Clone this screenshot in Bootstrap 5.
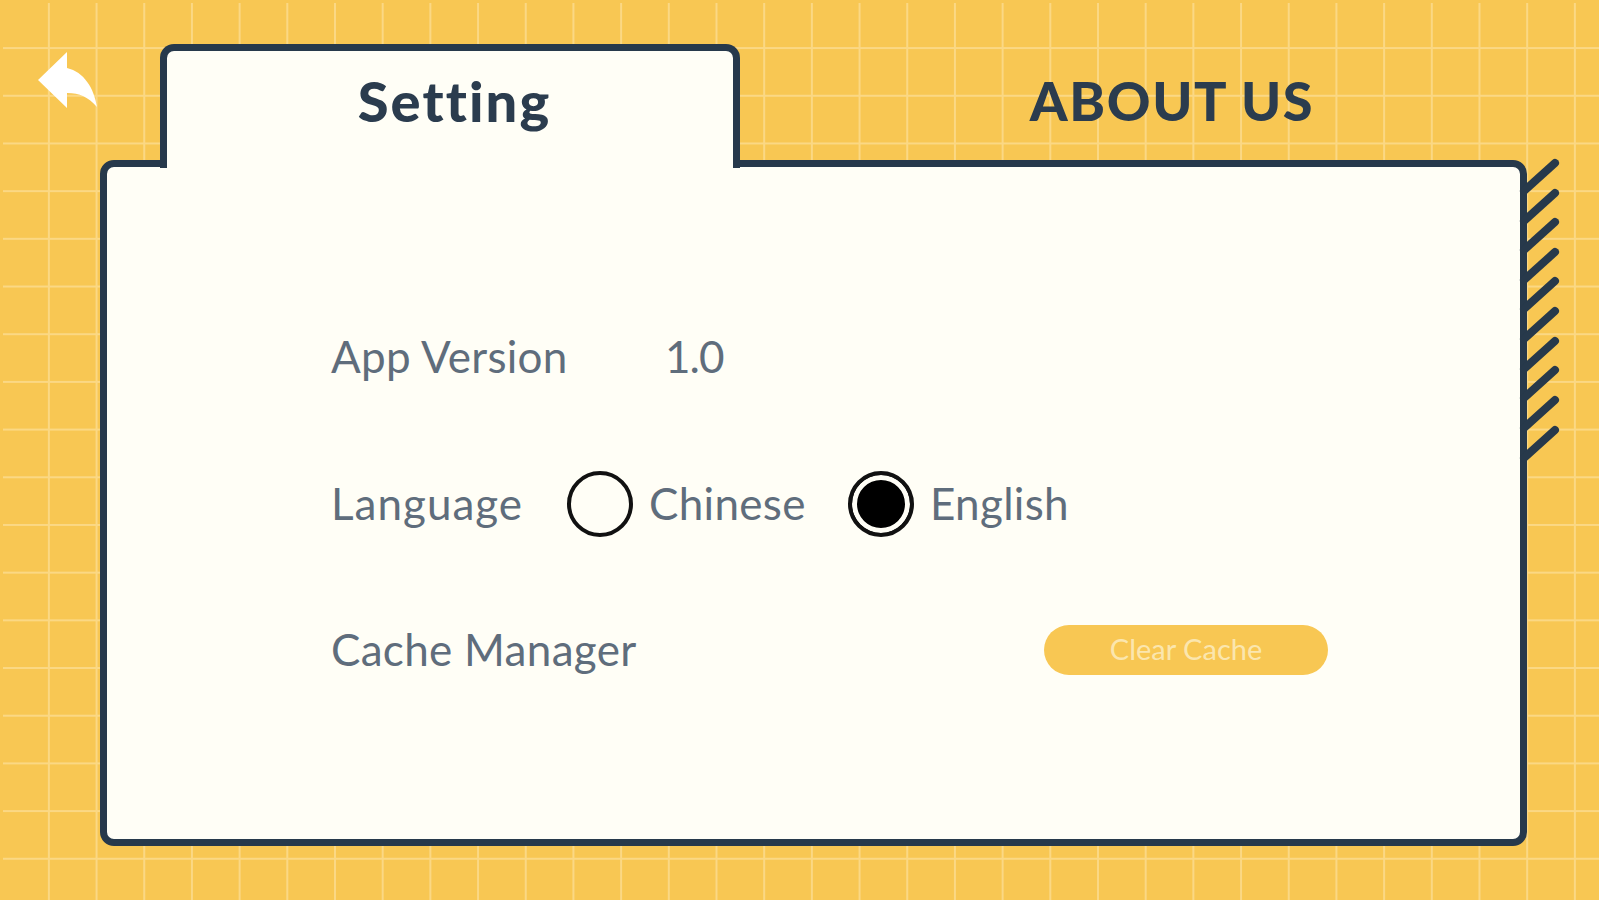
<!DOCTYPE html>
<html lang="en">
<head>
    <meta charset="UTF-8">
    <title>Setting</title>
    <meta name="viewport" content="width=device-width, initial-scale=1">
    <link href="https://cdn.jsdelivr.net/npm/bootstrap@5.3.2/dist/css/bootstrap.min.css" rel="stylesheet">
    <style>
        body {
            height: 900px;
            overflow: hidden;
            font-family: "Lato", "Liberation Sans", sans-serif;
            font-variant-ligatures: none;
            background-color: #f8c753;
            background-image:
                linear-gradient(#f8c753, #f8c753),
                linear-gradient(#f8c753, #f8c753),
                linear-gradient(to right, #fbd884 2.4px, transparent 2.4px),
                linear-gradient(to bottom, #fbd884 2.4px, transparent 2.4px);
            background-size: 3px 100%, 100% 3px, 47.7px 47.7px, 47.7px 47.7px;
            background-repeat: no-repeat, no-repeat, repeat, repeat;
            background-position: 0 0, 0 0, 0.2px -0.6px, 0.2px -0.6px;
        }
        .page-wrap { position: relative; padding: 44px 72px 0 100px; }
        .back-btn { position: absolute; left: 30px; top: 44px; width: 75px; height: 72px; padding: 0; border: 0; background: none; }
        .tab-row { height: 124px; }
        .tab-active {
            position: relative;
            z-index: 2;
            flex: 0 0 580px;
            height: 124px;
            margin-left: 60px;
            padding: 0 0 18px 9px;
            background: #fffef6;
            border: 7px solid #27394b;
            border-bottom: 0;
            border-radius: 14px 14px 0 0;
        }
        .tab-title { font-size: 54px; font-weight: 900; letter-spacing: 1.6px; color: #2b3c4e; line-height: 1; }
        .tab-active .tab-title { font-size: 56px; letter-spacing: 2.1px; }
        .tab-about { padding-left: 77px; padding-bottom: 10px; }
        .panel-box {
            position: relative;
            height: 686px;
            margin-top: -8px;
            padding: 156px 0 0 224px;
            background: #fffef6;
            border: 7px solid #27394b;
            border-radius: 14px;
        }
        .hatch { position: absolute; left: 1409px; top: -12px; width: 48px; height: 310px; overflow: visible; }
        .set-row { height: 66px; margin-bottom: 80.5px; font-size: 44px; letter-spacing: 0.3px; color: #5f6d7c; }
        .lbl-version { width: 334px; }
        .lbl-lang { width: 236px; letter-spacing: 1px; }
        .lbl-cache { width: 713px; }
        .lang-opt { width: 281px; }
        .val-num { letter-spacing: -1px; }
        .form-check-input.lang-radio {
            width: 66px;
            height: 66px;
            margin: 2px 0 0;
            background-color: #fffef6;
            background-image: none;
            border: 4px solid #111;
        }
        .form-check-input.lang-radio:checked {
            background-color: #000;
            box-shadow: inset 0 0 0 5px #fffef6;
        }
        .form-check-input.lang-radio:focus { box-shadow: none; }
        .btn.clear-btn {
            flex: 0 0 284px;
            height: 50px;
            margin-top: 2px;
            padding: 0 0 3px;
            font-size: 29px;
            line-height: 1;
            color: #fbe6ae;
            background: #f8c753;
            border: 0;
            border-radius: 25px;
        }
    </style>
</head>
<body>
    <div class="page-wrap">
        <button class="back-btn" type="button" aria-label="Back">
            <svg width="75" height="72" viewBox="30 44 75 72">
                <path fill="#fff" d="M38 80 L67 52 L67 68 C84 72 94 88 97 107 C88 97 80 93 67 93 L67 108 Z"/>
            </svg>
        </button>

        <div class="tab-row d-flex">
            <div class="tab-active d-flex align-items-center justify-content-center">
                <span class="tab-title">Setting</span>
            </div>
            <div class="tab-about flex-grow-1 d-flex align-items-center justify-content-center">
                <span class="tab-title">ABOUT US</span>
            </div>
        </div>

        <div class="panel-box">
            <svg class="hatch" viewBox="0 0 48 310" stroke="#27394b" stroke-width="8" stroke-linecap="round">
                <line x1="8" y1="36" x2="39" y2="8"/>
                <line x1="8" y1="66" x2="39" y2="38"/>
                <line x1="8" y1="95" x2="39" y2="67"/>
                <line x1="8" y1="125" x2="39" y2="97"/>
                <line x1="8" y1="154" x2="39" y2="126"/>
                <line x1="8" y1="184" x2="39" y2="156"/>
                <line x1="8" y1="214" x2="39" y2="186"/>
                <line x1="8" y1="243" x2="39" y2="215"/>
                <line x1="8" y1="273" x2="39" y2="245"/>
                <line x1="8" y1="303" x2="39" y2="275"/>
            </svg>

            <div class="set-row d-flex align-items-center">
                <span class="lbl-version">App Version</span>
                <span class="val-num">1.0</span>
            </div>
            <div class="set-row d-flex align-items-center">
                <span class="lbl-lang">Language</span>
                <label class="lang-opt d-flex align-items-center gap-3">
                    <input class="form-check-input lang-radio" type="radio" name="lang">
                    Chinese
                </label>
                <label class="d-flex align-items-center gap-3">
                    <input class="form-check-input lang-radio" type="radio" name="lang" checked>
                    English
                </label>
            </div>
            <div class="set-row d-flex align-items-center">
                <span class="lbl-cache">Cache Manager</span>
                <button class="btn clear-btn" type="button">Clear Cache</button>
            </div>
        </div>
    </div>
</body>
</html>
